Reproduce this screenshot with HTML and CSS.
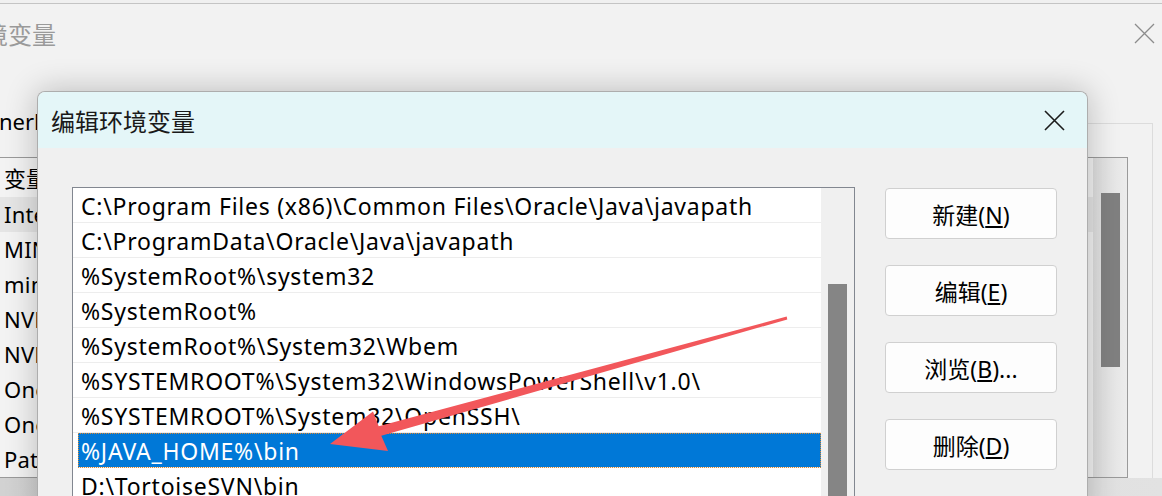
FILE: index.html
```html
<!DOCTYPE html>
<html lang="zh-CN">
<head>
    <meta charset="UTF-8">
    <title>编辑环境变量</title>
    <link rel="stylesheet" href="styles.css">
</head>
<body>
    <div class="desktop">
        <!-- parent window: 环境变量 -->
        <div class="bg-window">
            <div class="bg-titlebar">
                <span class="bg-title">环境变量</span>
                <svg class="bg-close" width="21" height="21" viewBox="0 0 21 21">
                    <path d="M1 1L20 20M20 1L1 20" stroke="#8c8c8c" stroke-width="1.3" fill="none"/>
                </svg>
            </div>
            <div class="group">
                <span class="group-caption">nerl</span>
                <div class="var-list">
                    <div class="var-rows">
                        <div class="var-head">变量</div>
                        <div class="var-row hover">IntelliJ IDEA</div>
                        <div class="var-row">MINGW</div>
                        <div class="var-row">minio</div>
                        <div class="var-row">NVM_HOME</div>
                        <div class="var-row">NVM_SYMLINK</div>
                        <div class="var-row">OneDrive</div>
                        <div class="var-row">OneDriveConsumer</div>
                        <div class="var-row">Path</div>
                    </div>
                    <div class="bg-scroll"><div class="bg-thumb"></div></div>
                </div>
            </div>
            <div class="bg-footer"></div>
        </div>

        <!-- 编辑环境变量 dialog -->
        <div class="dialog">
            <div class="dlg-titlebar">
                <span class="dlg-title">编辑环境变量</span>
                <svg class="dlg-close" width="21" height="21" viewBox="0 0 21 21">
                    <path d="M1 1L20 20M20 1L1 20" stroke="#1b1b1b" stroke-width="1.6" fill="none"/>
                </svg>
            </div>
            <div class="dlg-body">
                <div class="path-list">
                    <div class="path-rows" id="pathRows"></div>
                    <div class="path-scroll"><div class="path-thumb"></div></div>
                </div>
                <div class="actions">
                    <button class="btn">新建(<u>N</u>)</button>
                    <button class="btn">编辑(<u>E</u>)</button>
                    <button class="btn">浏览(<u>B</u>)...</button>
                    <button class="btn">删除(<u>D</u>)</button>
                </div>
            </div>
        </div>

        <svg class="arrow" width="1162" height="496" viewBox="0 0 1162 496">
            <polygon fill="#f2575b" points="787.3,319.4 381.3,435.8 388,451 330,444 373,411.6 378.7,426.2 786.7,316.6"/>
        </svg>
    </div>

    <script>
        const paths = [
            'C:\\Program Files (x86)\\Common Files\\Oracle\\Java\\javapath',
            'C:\\ProgramData\\Oracle\\Java\\javapath',
            '%SystemRoot%\\system32',
            '%SystemRoot%',
            '%SystemRoot%\\System32\\Wbem',
            '%SYSTEMROOT%\\System32\\WindowsPowerShell\\v1.0\\',
            '%SYSTEMROOT%\\System32\\OpenSSH\\',
            '%JAVA_HOME%\\bin',
            'D:\\TortoiseSVN\\bin'
        ];
        const pathRows = document.getElementById('pathRows');

        paths.forEach((p, i) => {
            const row = document.createElement('div');
            row.classList.add('path-row');
            if (i === 7) row.classList.add('selected');
            row.textContent = p;
            pathRows.appendChild(row);
        });
    </script>
</body>
</html>
```

FILE: styles.css
```css
body {
    margin: 0;
    background: #f0f0f0;
    font-family: "Noto Sans", "Noto Sans CJK SC", sans-serif;
    color: #000;
}
.desktop {
    position: relative;
    width: 1162px;
    height: 496px;
    overflow: hidden;
    background: #f0f0f0;
}

/* parent window */
.bg-window {
    margin-top: 3px;
    border-top: 1px solid #c4c4c4;
    background: #f2f2f2;
}
.bg-titlebar {
    height: 58px;
    display: flex;
    align-items: center;
    justify-content: space-between;
    padding-right: 7px;
}
.bg-title {
    margin-left: -40px;
    font-family: "Noto Sans CJK SC", sans-serif;
    font-size: 24px;
    color: #9a9a9a;
}
.bg-close {
    display: block;
}
.group {
    margin: 61px 0 0 -10px;
    width: 1163px;
    box-sizing: border-box;
    border-top: 1px solid #dcdcdc;
    border-right: 1px solid #dcdcdc;
    padding-right: 24px;
}
.group-caption {
    display: block;
    width: 46px;
    margin: -16px 0 0 9px;
    line-height: 26px;
    font-size: 22px;
    background: #f2f2f2;
}
.var-list {
    margin-top: 23px;
    border: 1px solid #9a9a9a;
    border-left: none;
    display: flex;
    background: #f3f3f3;
}
.var-rows {
    flex: 1;
}
.var-head {
    height: 39px;
    line-height: 39px;
    padding-left: 14px;
    font-family: "Noto Sans CJK SC", sans-serif;
    font-size: 22px;
}
.var-row {
    height: 35px;
    line-height: 35px;
    padding-left: 14px;
    font-size: 22px;
    letter-spacing: 0.2px;
}
.var-row.hover {
    background: #e5e5e5;
}
.bg-scroll {
    width: 34px;
    background: linear-gradient(to right, #dedede, #ececec);
}
.bg-thumb {
    width: 19px;
    height: 174px;
    margin: 35px 0 0 8px;
    background: #808080;
}
.bg-footer {
    height: 30px;
    background: linear-gradient(to right, #d2d2d2, #e2e2e2);
}

/* edit dialog */
.dialog {
    position: absolute;
    left: 37px;
    top: 91px;
    width: 1051px;
    height: 430px;
    box-sizing: border-box;
    border: 1px solid #adadad;
    border-bottom: none;
    border-radius: 8px 8px 0 0;
    background: #f0f0f0;
    box-shadow: 0 0 32px rgba(0, 0, 0, 0.24);
    overflow: hidden;
}
.dlg-titlebar {
    height: 56px;
    display: flex;
    align-items: center;
    justify-content: space-between;
    padding: 0 22px 0 13px;
    background: #e4f6f8;
}
.dlg-title {
    font-family: "Noto Sans CJK SC", sans-serif;
    font-size: 24px;
    color: #1a1a1a;
}
.dlg-close {
    display: block;
}
.dlg-body {
    display: flex;
    align-items: flex-start;
    gap: 30px;
    padding: 39px 0 0 34px;
}
.path-list {
    width: 783px;
    height: 330px;
    box-sizing: border-box;
    border: 1px solid #828790;
    background: #fff;
    display: flex;
}
.path-rows {
    width: 748px;
}
.path-row {
    height: 34px;
    line-height: 36px;
    padding-left: 8px;
    border-bottom: 1px solid #ededed;
    font-size: 23px;
    letter-spacing: 0.75px;
    white-space: nowrap;
    overflow: hidden;
}
.path-row.selected {
    margin-left: 5px;
    padding-left: 3px;
    background: #0078d7;
    color: #fff;
    outline: 1px dotted #e0892f;
    outline-offset: -1px;
}
.path-scroll {
    width: 33px;
    background: #f0f0f0;
}
.path-thumb {
    width: 19px;
    height: 300px;
    margin: 96px 0 0 7px;
    background: #858585;
}
.actions {
    display: flex;
    flex-direction: column;
    gap: 26px;
    margin-top: 1px;
}
.btn {
    width: 172px;
    height: 51px;
    border: 1px solid #d0d0d0;
    border-radius: 4px;
    background: #fdfdfd;
    font-family: "Noto Sans", "Noto Sans CJK SC", sans-serif;
    font-size: 23px;
    color: #000;
    padding: 0;
}

.arrow {
    position: absolute;
    left: 0;
    top: 0;
    pointer-events: none;
}
```
